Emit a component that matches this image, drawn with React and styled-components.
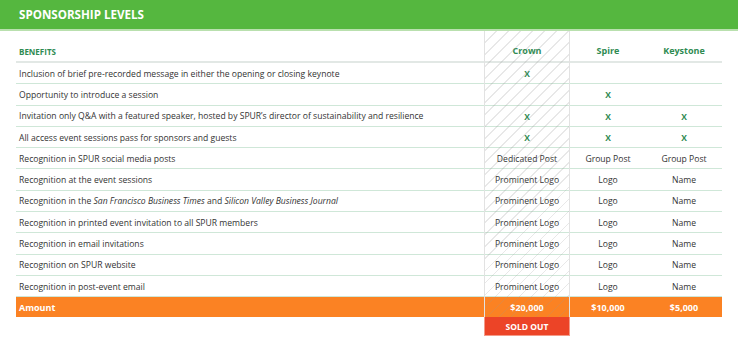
import React from "react";
import styled, { createGlobalStyle } from "styled-components";

const Global = createGlobalStyle`
  html, body { margin: 0; padding: 0; background: #fff; }
  body { font-family: "Open Sans", "Liberation Sans", sans-serif; }
`;

const Page = styled.div`
  width: 738px;
  height: 347px;
  overflow: hidden;
`;

const TitleBar = styled.div`
  height: 29px;
  background: #55b73f;
  border-bottom: 2px solid #b9e0ae;
  display: flex;
  align-items: center;
  padding-left: 19px;
  color: #fff;
  font-weight: 700;
  font-size: 11.6px;
`;

const TableWrap = styled.div`
  position: relative;
  margin: 0 16px;
`;

const Grid = styled.div`
  display: grid;
  grid-template-columns: 468px 86px 76px 76px;
`;

const Cell = styled.div`
  box-sizing: border-box;
  height: ${(p) => p.$h || "21.3px"};
  display: flex;
  align-items: center;
  justify-content: ${(p) => (p.$first ? "flex-start" : "center")};
  padding-left: ${(p) => (p.$first ? "3px" : "0")};
  padding-top: 1px;
  border-bottom: 1px solid #cfe7d8;
  font-size: 8.6px;
  color: #333;
  white-space: nowrap;
`;

const HeadCell = styled(Cell)`
  height: 32px;
  align-items: flex-end;
  padding-bottom: 4px;
  border-bottom: 2px solid #e2e8e5;
  color: #2f8b52;
  font-weight: 700;
  font-size: ${(p) => (p.$first ? "8px" : "9px")};
`;

const Mark = styled.span`
  color: #2f8b52;
  font-weight: 700;
  font-size: 8.5px;
`;

const AmountCell = styled(Cell)`
  height: 20px;
  padding-top: 0;
  background: #fb8223;
  border-bottom: none;
  color: #fff;
  font-weight: 700;
  font-size: 9px;
`;

const SoldOut = styled.div`
  grid-column: 2;
  box-sizing: border-box;
  height: 19px;
  background: #ec4427;
  border: 1px solid #f49a88;
  border-top: none;
  color: #fff;
  font-weight: 700;
  font-size: 8.5px;
  display: flex;
  align-items: center;
  justify-content: center;
`;

const Hatch = styled.div`
  position: absolute;
  top: 0;
  left: 468px;
  width: 86px;
  height: 286px;
  box-sizing: border-box;
  border-left: 1px solid #e2e2e2;
  border-right: 1px solid #e2e2e2;
  pointer-events: none;
  background: repeating-linear-gradient(
    135deg,
    transparent 0px,
    transparent 7.5px,
    rgba(150, 150, 150, 0.22) 7.5px,
    rgba(150, 150, 150, 0.22) 8.5px
  );
`;

const X = () => <Mark>X</Mark>;

const rows = [
  ["Inclusion of brief pre-recorded message in either the opening or closing keynote", <X />, "", ""],
  ["Opportunity to introduce a session", "", <X />, ""],
  ["Invitation only Q&A with a featured speaker, hosted by SPUR’s director of sustainability and resilience", <X />, <X />, <X />],
  ["All access event sessions pass for sponsors and guests", <X />, <X />, <X />],
  ["Recognition in SPUR social media posts", "Dedicated Post", "Group Post", "Group Post"],
  ["Recognition at the event sessions", "Prominent Logo", "Logo", "Name"],
  [
    <>Recognition in the&nbsp;<i>San Francisco Business Times</i>&nbsp;and&nbsp;<i>Silicon Valley Business Journal</i></>,
    "Prominent Logo",
    "Logo",
    "Name",
  ],
  ["Recognition in printed event invitation to all SPUR members", "Prominent Logo", "Logo", "Name"],
  ["Recognition in email invitations", "Prominent Logo", "Logo", "Name"],
  ["Recognition on SPUR website", "Prominent Logo", "Logo", "Name"],
  ["Recognition in post-event email", "Prominent Logo", "Logo", "Name"],
];

export default function App() {
  return (
    <Page>
      <Global />
      <TitleBar>SPONSORSHIP LEVELS</TitleBar>
      <TableWrap>
        <Grid>
          <HeadCell $first>BENEFITS</HeadCell>
          <HeadCell>Crown</HeadCell>
          <HeadCell>Spire</HeadCell>
          <HeadCell>Keystone</HeadCell>
          {rows.map((r, i) => (
            <React.Fragment key={i}>
              <Cell $first>{r[0]}</Cell>
              <Cell>{r[1]}</Cell>
              <Cell>{r[2]}</Cell>
              <Cell>{r[3]}</Cell>
            </React.Fragment>
          ))}
          <AmountCell $first>Amount</AmountCell>
          <AmountCell>$20,000</AmountCell>
          <AmountCell>$10,000</AmountCell>
          <AmountCell>$5,000</AmountCell>
          <SoldOut>SOLD OUT</SoldOut>
        </Grid>
        <Hatch />
      </TableWrap>
    </Page>
  );
}
